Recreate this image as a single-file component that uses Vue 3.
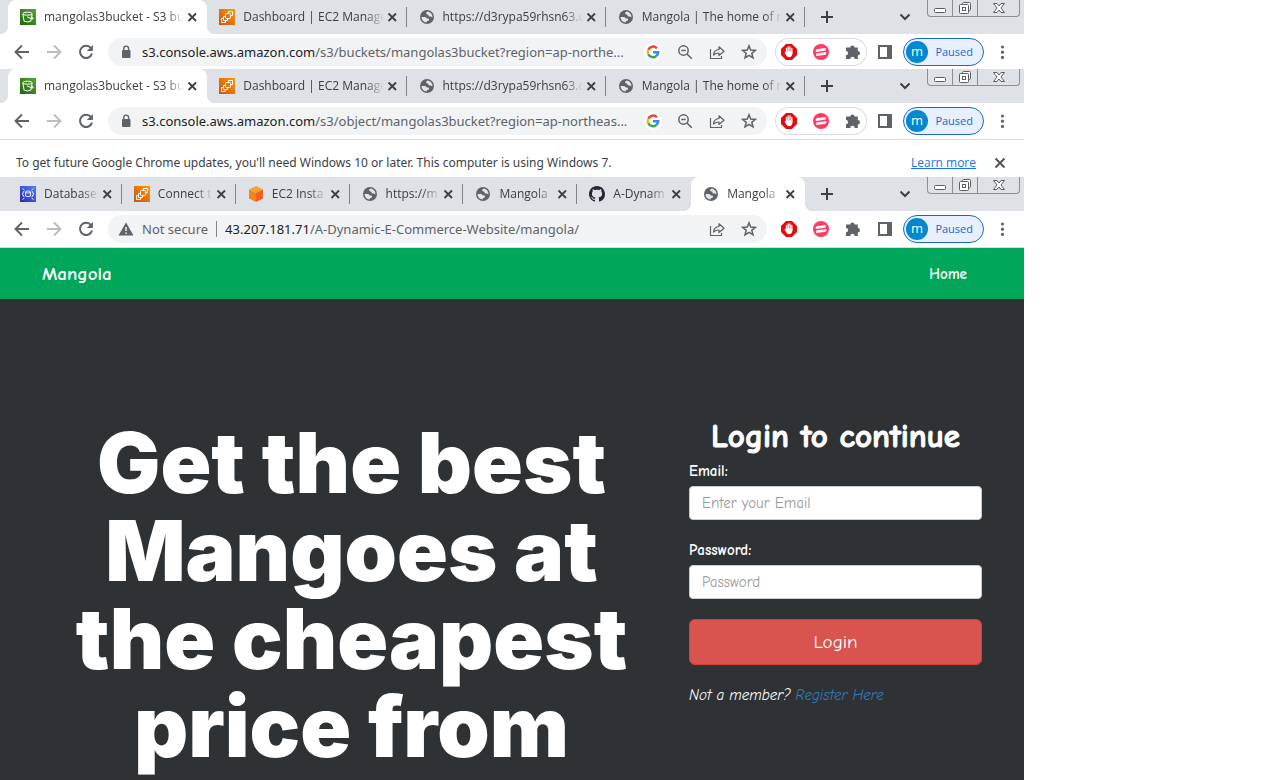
<script setup>
const wideTabs = [
  { icon: 's3', title: 'mangolas3bucket - S3 bu', active: true },
  { icon: 'ec2', title: 'Dashboard | EC2 Manage' },
  { icon: 'globe', title: 'https://d3rypa59rhsn63.c' },
  { icon: 'globe', title: 'Mangola | The home of m' },
]
const windows = [
  {
    tabs: wideTabs, host: 's3.console.aws.amazon.com', path: '/s3/buckets/mangolas3bucket?region=ap-northe...',
    secure: true, notice: false,
  },
  {
    tabs: wideTabs, host: 's3.console.aws.amazon.com', path: '/s3/object/mangolas3bucket?region=ap-northeas...',
    secure: true, notice: true,
  },
  {
    tabs: [
      { icon: 'rds', title: 'Databases' },
      { icon: 'ec2', title: 'Connect t' },
      { icon: 'cube', title: 'EC2 Insta' },
      { icon: 'globe', title: 'https://m' },
      { icon: 'globe', title: 'Mangola' },
      { icon: 'github', title: 'A-Dynam' },
      { icon: 'globe', title: 'Mangola', active: true },
    ],
    host: '43.207.181.71', path: '/A-Dynamic-E-Commerce-Website/mangola/',
    secure: false, notice: false,
  },
]
</script>

<template>
  <div class="desk">
    <svg class="sprite" aria-hidden="true">
      <defs>
        <linearGradient id="gGreen" x1="0" y1="1" x2="1" y2="0"><stop offset="0" stop-color="#1b660f" /><stop offset="1" stop-color="#5fa237" /></linearGradient>
        <linearGradient id="gOrange" x1="0" y1="1" x2="1" y2="0"><stop offset="0" stop-color="#c8511b" /><stop offset="1" stop-color="#f90" /></linearGradient>
        <linearGradient id="gBlue" x1="0" y1="1" x2="1" y2="0"><stop offset="0" stop-color="#2e27ad" /><stop offset="1" stop-color="#527fff" /></linearGradient>
      </defs>
      <symbol id="s3" viewBox="0 0 16 16">
        <rect width="16" height="16" fill="url(#gGreen)" />
        <g fill="none" stroke="#fff" stroke-width="1"><ellipse cx="7.5" cy="4.7" rx="4.7" ry="1.5" /><path d="M2.800 5l1.300 7.200q3.300 1.500 6.700 0L12.200 5M7 7.800l5 2.200q1.800.3 1-1l-1-1" /></g>
      </symbol>
      <symbol id="ec2" viewBox="0 0 16 16">
        <rect width="16" height="16" fill="url(#gOrange)" />
        <g fill="none" stroke="#fff" stroke-width="1"><rect x="6.500" y="4.500" width="5" height="5" rx="1" /><path d="M6.500 7.500h-2v4h4v-2M4.500 9.500h-2v4h4v-2M9.500 4.500v-2h4v4h-2" /></g>
      </symbol>
      <symbol id="rds" viewBox="0 0 16 16">
        <rect width="16" height="16" fill="url(#gBlue)" />
        <g fill="none" stroke="#fff" stroke-width="0.900"><path d="M5.500 6v4q2.500 1.300 5 0V6M4 5L2.500 8 4 11M12 5l1.500 3-1.500 3M2.500 2.500l2 1.500M13.500 2.500l-2 1.500M2.500 13.500l2-1.500M13.500 13.500l-2-1.500" /><ellipse cx="8" cy="6" rx="2.500" ry="1" /></g>
      </symbol>
      <symbol id="cube" viewBox="0 0 16 16">
        <path d="M8 0l7 3.500L8 7 1 3.500z" fill="#fba22d" /><path d="M1 3.500L8 7v9l-7-3.500z" fill="#f58220" /><path d="M15 3.500L8 7v9l7-3.500z" fill="#f06022" />
      </symbol>
      <symbol id="globe" viewBox="0 0 16 16">
        <circle cx="8" cy="8" r="7" fill="#5f6368" />
        <path d="M2.500 8h3.200q1.900 0 2.100 1.600h1.500q.9.200.8 1.200-.1 1-1.200 1.100H7.800v1.600Q2.900 13.300 2.500 8zM8.800 2.600q-1.700.6-1.700 1.700 0 1.100 1.200 1.200h.5q.7.100.7.900 0 1 1 1h1.400q.8.100.8.800h.8Q13.300 3.600 8.800 2.600z" fill="#e4e6ea" />
      </symbol>
      <symbol id="github" viewBox="0 0 16 16">
        <path fill="#24292f" d="M8 0C3.580 0 0 3.580 0 8c0 3.540 2.290 6.530 5.470 7.590.4.070.55-.17.550-.38 0-.19-.01-.82-.01-1.490-2.010.37-2.530-.49-2.690-.94-.09-.23-.48-.94-.82-1.130-.28-.15-.68-.52-.01-.53.63-.01 1.080.58 1.230.82.720 1.210 1.870.87 2.330.66.070-.52.280-.87.510-1.070-1.780-.2-3.640-.89-3.640-3.950 0-.87.310-1.590.82-2.150-.08-.2-.36-1.020.08-2.120 0 0 .67-.21 2.200.82.640-.18 1.320-.27 2-.27s1.360.09 2 .27c1.530-1.040 2.200-.82 2.200-.82.440 1.100.16 1.920.08 2.120.51.560.82 1.270.82 2.150 0 3.070-1.870 3.750-3.650 3.950.29.250.54.730.54 1.480 0 1.070-.01 1.930-.01 2.200 0 .21.150.46.550.38A8.010 8.010 0 0016 8c0-4.420-3.580-8-8-8z" />
      </symbol>
      <symbol id="x" viewBox="0 0 16 16"><path d="M4.500 4.500l7.500 7.500M12 4.500L4.500 12" stroke="#3c4043" stroke-width="1.800" /></symbol>
      <symbol id="xlarge" viewBox="0 0 16 16"><path d="M3.500 3.500l9 9M12.500 3.500l-9 9" stroke="#4d5156" stroke-width="1.900" /></symbol>
      <symbol id="plus" viewBox="0 0 16 16"><path d="M8 2v12M2 8h12" stroke="#3c4043" stroke-width="2" /></symbol>
      <symbol id="chev" viewBox="0 0 16 16"><path d="M3.500 5.500L8 10l4.500-4.500" fill="none" stroke="#3c4043" stroke-width="2" /></symbol>
      <symbol id="back" viewBox="0 0 16 16"><path d="M15 8H2M8 1.500L1.500 8 8 14.500" fill="none" stroke="currentColor" stroke-width="1.900" /></symbol>
      <symbol id="fwd" viewBox="0 0 16 16"><path d="M1 8h13M8 1.500L14.500 8 8 14.500" fill="none" stroke="currentColor" stroke-width="1.900" /></symbol>
      <symbol id="reload" viewBox="0 0 16 16"><path d="M13 4.200A6.100 6.100 0 1 0 14 9.500" fill="none" stroke="currentColor" stroke-width="2" /><path d="M14.900 1v6H8.800z" fill="currentColor" /></symbol>
      <symbol id="lock" viewBox="0 0 16 16"><rect x="4" y="6" width="8.500" height="8" rx="1" fill="#5f6368" /><path d="M5.800 7V4.500a2.400 2.400 0 0 1 4.800 0V7" fill="none" stroke="#5f6368" stroke-width="1.400" /></symbol>
      <symbol id="warn" viewBox="0 0 16 16"><path d="M8 1.500L15.500 14.500H.5z" fill="#5f6368" /><path d="M8 6v4M8 11.500v1.500" stroke="#f1f3f4" stroke-width="1.500" /></symbol>
      <symbol id="google" viewBox="0 0 20 20">
        <circle cx="10" cy="10" r="9" fill="#fff" />
        <g fill="none" stroke-width="2.500"><path d="M13.900 6.300A5.200 5.200 0 0 0 5.300 7.800" stroke="#ea4335" /><path d="M5.300 7.700a5.200 5.200 0 0 0 0 4.700" stroke="#fbbc05" /><path d="M5.300 12.300a5.200 5.200 0 0 0 8 1.700" stroke="#34a853" /><path d="M13.300 14A5.200 5.200 0 0 0 15.200 10.200H10" stroke="#4285f4" /></g>
      </symbol>
      <symbol id="mag" viewBox="0 0 16 16"><g fill="none" stroke="#5f6368" stroke-width="1.500"><circle cx="6.500" cy="6.500" r="4.700" /><path d="M10 10l4.800 4.800M4.300 6.500h4.400" /></g></symbol>
      <symbol id="share" viewBox="0 0 16 16"><path d="M1.500 5v9.500h11V12M4.500 11q.4-5 5.500-5.500V2.800L15 7.200 10 11.500V9q-3.500 0-5.500 2z" fill="none" stroke="#5f6368" stroke-width="1.200" stroke-linejoin="round" /></symbol>
      <symbol id="star" viewBox="0 0 16 16"><path d="M8 1.800l1.700 4.300 4.700.3-3.600 2.900 1.200 4.500L8 11.300l-4 2.500 1.200-4.500L1.600 6.400l4.700-.3z" fill="none" stroke="#5f6368" stroke-width="1.500" /></symbol>
      <symbol id="block" viewBox="0 0 16 16"><path d="M5 0h6l5 5v6l-5 5H5l-5-5V5z" fill="#e40d0d" /><path d="M5.500 9V4.500M7.200 8V3M9 8V3M10.800 9V4.500" stroke="#fff" stroke-width="1.300" stroke-linecap="round" /><path d="M4.900 7.500h6.500V10q-.5 3-3 3.200Q6 13.200 5 11L3.500 8.800z" fill="#fff" /></symbol>
      <symbol id="pink" viewBox="0 0 16 16"><circle cx="8" cy="8" r="8" fill="#ff3b62" /><path d="M12.800 4.600L5 5.600Q3 6 3.300 7.400M3 7.300L12.800 5.900M3.200 11.400L11 10.400Q13 10 12.700 8.600M13 8.700L3.200 10.100" fill="none" stroke="#fff" stroke-width="1.300" /></symbol>
      <symbol id="puzzle" viewBox="0 0 16 16"><path d="M1 3.500h4.300a2.100 2.100 0 0 1 4.200 0h3.300v3.500a2.200 2.200 0 0 1 0 4.400V15H9.700a2.200 2.200 0 0 0-4.400 0H1v-3.700a2.100 2.100 0 0 0 0-4.200z" fill="#5f6368" /></symbol>
      <symbol id="panel" viewBox="0 0 16 16"><path d="M2 2h12v12H2z" fill="none" stroke="#5f6368" stroke-width="2" /><path d="M10 2h4v12H10z" fill="#5f6368" /></symbol>
      <symbol id="dots" viewBox="0 0 16 16"><g fill="#5f6368"><circle cx="8.500" cy="3" r="1.600" /><circle cx="8.500" cy="8.200" r="1.600" /><circle cx="8.500" cy="13.400" r="1.600" /></g></symbol>
      <symbol id="wmin" viewBox="0 0 16 16"><rect x="2.500" y="8.500" width="11" height="4" rx="1" fill="#fff" stroke="#5a5d61" /></symbol>
      <symbol id="wmax" viewBox="0 0 16 16"><g fill="#fff" stroke="#5a5d61"><rect x="5.500" y="2.500" width="8" height="8" rx="1" /><rect x="2.500" y="4.500" width="9" height="9" rx="1" /><rect x="5.500" y="7.500" width="3" height="3" /></g></symbol>
      <symbol id="wclose" viewBox="0 0 16 16"><path d="M2.500 3.500h3.500l2 2.500 2-2.500h3.500L10 8l3.500 4.500H10L8 10l-2 2.500H2.500L6 8z" fill="#fff" stroke="#5a5d61" /></symbol>
    </svg>

    <section v-for="(w, i) in windows" :key="i" class="window">
      <div class="strip">
        <div class="tabs">
          <div v-for="(t, k) in w.tabs" :key="k" class="tab" :class="{ active: t.active, beforeActive: w.tabs[k + 1]?.active }">
            <svg class="i16"><use :href="'#' + t.icon" /></svg>
            <span class="title">{{ t.title }}</span>
            <button class="bare" aria-label="Close tab"><svg class="i16"><use href="#x" /></svg></button>
          </div>
        </div>
        <button class="bare newtab" aria-label="New tab"><svg class="i16"><use href="#plus" /></svg></button>
        <button class="bare search" aria-label="Search tabs"><svg class="i16"><use href="#chev" /></svg></button>
        <div class="controls">
          <button class="bare" aria-label="Minimize"><svg class="i16"><use href="#wmin" /></svg></button>
          <button class="bare" aria-label="Restore"><svg class="i16"><use href="#wmax" /></svg></button>
          <button class="bare wide" aria-label="Close"><svg class="i16"><use href="#wclose" /></svg></button>
        </div>
      </div>
      <div class="toolbar" :class="{ lined: i > 0 }">
        <button class="bare slot" aria-label="Back"><svg class="i16"><use href="#back" /></svg></button>
        <button class="bare slot dim" aria-label="Forward"><svg class="i16"><use href="#fwd" /></svg></button>
        <button class="bare slot" aria-label="Reload"><svg class="i16"><use href="#reload" /></svg></button>
        <div class="omnibox">
          <svg class="i16"><use :href="w.secure ? '#lock' : '#warn'" /></svg>
          <span v-if="!w.secure" class="insecure">Not secure</span>
          <span class="url"><span class="host">{{ w.host }}</span>{{ w.path }}</span>
          <button v-if="w.secure" class="bare slot" aria-label="Google"><svg class="i20"><use href="#google" /></svg></button>
          <button v-if="w.secure" class="bare slot" aria-label="Zoom"><svg class="i16"><use href="#mag" /></svg></button>
          <button class="bare slot" aria-label="Share"><svg class="i16"><use href="#share" /></svg></button>
          <button class="bare slot" aria-label="Bookmark"><svg class="i16"><use href="#star" /></svg></button>
        </div>
        <div class="extensions" :class="{ ringed: w.secure }">
          <button class="bare slot" aria-label="Ad blocker"><svg class="i16"><use href="#block" /></svg></button>
          <button class="bare slot" aria-label="Extension"><svg class="i16"><use href="#pink" /></svg></button>
          <button class="bare slot" aria-label="Extensions"><svg class="i16"><use href="#puzzle" /></svg></button>
        </div>
        <button class="bare slot" aria-label="Side panel"><svg class="i16"><use href="#panel" /></svg></button>
        <button class="profile"><span class="avatar">m</span><span>Paused</span></button>
        <button class="bare slot" aria-label="Menu"><svg class="i16"><use href="#dots" /></svg></button>
      </div>
      <div v-if="w.notice" class="notice">
        <span class="message">To get future Google Chrome updates, you'll need Windows 10 or later. This computer is using Windows 7.</span>
        <a href="#learn">Learn more</a>
        <button class="bare slot" aria-label="Dismiss"><svg class="i16"><use href="#xlarge" /></svg></button>
      </div>
    </section>

    <nav class="nav">
      <a class="brand" href="#top">Mangola</a>
      <a href="#home">Home</a>
    </nav>
    <main class="hero">
      <h1>Get the best<br>Mangoes at<br>the cheapest<br>price from</h1>
      <form class="login" @submit.prevent>
        <h2>Login to continue</h2>
        <label for="email">Email:</label>
        <input id="email" type="email" placeholder="Enter your Email">
        <label for="password">Password:</label>
        <input id="password" type="password" placeholder="Password">
        <button class="submit" type="submit">Login</button>
        <p><i>Not a member? <a href="#register">Register Here</a></i></p>
      </form>
    </main>
  </div>
</template>

<style>
body {
  background: #fff;
}
</style>

<style scoped>
* {
  box-sizing: border-box;
}
.desk {
  max-width: 1024px;
  height: 100vh;
  overflow: hidden;
  display: flex;
  flex-direction: column;
  font: 12px/16px "Segoe UI", "Open Sans", sans-serif;
  color: #3c4043;
}
.sprite {
  position: absolute;
  width: 0;
  height: 0;
}
.i16 {
  width: 16px;
  height: 16px;
  flex: none;
  display: block;
}
.i20 {
  width: 20px;
  height: 20px;
  display: block;
}
.bare {
  border: 0;
  padding: 0;
  background: none;
  color: #5f6368;
  flex: none;
}
.slot {
  width: 32px;
  display: flex;
  justify-content: center;
}
.dim {
  color: #babcbe;
}
.window {
  flex: none;
}
.strip {
  height: 34px;
  background: #dee1e6;
  display: flex;
  align-items: center;
  padding: 0 4px 0 8px;
}
.tabs {
  flex: 0 1 797px;
  min-width: 0;
  height: 34px;
  display: flex;
}
.tab {
  flex: 1 1 0;
  min-width: 0;
  display: flex;
  align-items: center;
  padding: 0 7px 0 12px;
  position: relative;
}
.tab:not(.active):not(.beforeActive)::after {
  content: "";
  position: absolute;
  right: 0;
  top: 7px;
  width: 1px;
  height: 20px;
  background: #808388;
}
.active {
  background: #fff;
  border-radius: 8px 8px 0 0;
}
.active::before,
.active::after {
  content: "";
  position: absolute;
  bottom: 0;
  width: 8px;
  height: 8px;
}
.active::before {
  left: -8px;
  background: radial-gradient(circle at 0 0, #dee1e6 8px, #fff 8px);
}
.active::after {
  right: -8px;
  background: radial-gradient(circle at 100% 0, #dee1e6 8px, #fff 8px);
}
.title {
  flex: 1;
  min-width: 0;
  margin: 0 0 0 8px;
  white-space: nowrap;
  overflow: hidden;
  mask-image: linear-gradient(to left, transparent, #000 18px);
}
.newtab {
  margin-left: 14px;
}
.search {
  margin-left: auto;
  margin-right: 14px;
}
.controls {
  align-self: flex-start;
  display: flex;
  height: 17px;
  border: 1px solid #8b8e93;
  border-top: 0;
  border-radius: 0 0 4px 4px;
}
.controls .bare {
  width: 25px;
  display: flex;
  justify-content: center;
  border-right: 1px solid #8b8e93;
}
.controls .wide {
  width: 41px;
  border-right: 0;
}
.toolbar {
  height: 35px;
  padding: 0 6px;
  display: flex;
  align-items: center;
  background: #fff;
}
.lined {
  height: 37px;
  border-bottom: 1px solid #dadce0;
}
.omnibox {
  flex: 1;
  min-width: 0;
  height: 28px;
  margin: 0 8px 0 6px;
  padding: 0 2px 0 10px;
  display: flex;
  align-items: center;
  border-radius: 14px;
  background: #f1f3f4;
  font: 13px/20px "Segoe UI", "Noto Sans", sans-serif;
  color: #5f6368;
}
.url {
  flex: 1;
  min-width: 0;
  margin-left: 8px;
  white-space: nowrap;
  overflow: hidden;
}
.host {
  color: #202124;
}
.insecure {
  margin-left: 8px;
  padding-right: 8px;
  border-right: 1px solid #80868b;
  line-height: 16px;
  white-space: nowrap;
}
.extensions {
  display: flex;
  align-items: center;
  width: 92px;
  height: 28px;
  margin-right: 2px;
  border-radius: 14px;
  justify-content: center;
}
.ringed {
  box-shadow: inset 0 0 0 1px #dadce0;
}
.profile {
  flex: none;
  width: 81px;
  height: 28px;
  margin: 0 2px;
  padding: 0 10px 0 2px;
  display: flex;
  align-items: center;
  justify-content: space-between;
  border: 1px solid #1967d2;
  border-radius: 14px;
  background: #e8f0fe;
  color: #1967d2;
  font: 11px/16px "Segoe UI", "Open Sans", sans-serif;
}
.avatar {
  width: 22px;
  height: 22px;
  border-radius: 50%;
  background: #0288d1;
  color: #fff;
  font-size: 13px;
  line-height: 20px;
  text-align: center;
}
.notice {
  height: 37px;
  padding: 8px 8px 0 16px;
  display: flex;
  align-items: center;
}
.message {
  flex: 1;
  font-family: "Segoe UI", "Noto Sans", sans-serif;
}
.notice a {
  margin-right: 8px;
  color: #1a73e8;
}
.nav {
  flex: none;
  height: 51px;
  padding: 0 57px 0 42px;
  display: flex;
  align-items: center;
  justify-content: space-between;
  background: #00a65a;
  font-family: "Comic Sans MS", "Comic Neue", "Open Sans", sans-serif;
  font-size: 15px;
  font-weight: 600;
}
.nav a {
  color: #fff;
  text-decoration: none;
}
.nav .brand {
  font-size: 19px;
}
.hero {
  flex: 1;
  padding: 120px 42px 0;
  display: flex;
  gap: 28px;
  background: #2e3235;
  color: #fff;
}
h1 {
  flex: 1;
  min-width: 0;
  margin: 0;
  text-align: center;
  font: 900 84px/88px "Arial Black", Inter, sans-serif;
}
.login {
  flex: 0 0 293px;
  font: 15px/20px "Comic Sans MS", "Comic Neue", "Open Sans", sans-serif;
}
h2 {
  margin: 0 0 8px;
  text-align: center;
  font-size: 33px;
  line-height: 34px;
  font-weight: 700;
  -webkit-text-stroke: 1px currentColor;
  white-space: nowrap;
}
label {
  display: block;
  margin-bottom: 5px;
  font-weight: 700;
}
input {
  display: block;
  width: 100%;
  height: 34px;
  margin-bottom: 20px;
  padding: 0 12px;
  border: 1px solid #ccc;
  border-radius: 4px;
  background: #fff;
  font: inherit;
}
input::placeholder {
  color: #999;
}
.submit {
  width: 100%;
  height: 46px;
  border: 1px solid #d43f3a;
  border-radius: 6px;
  background: #d9534f;
  color: #fff;
  font: inherit;
  font-size: 19px;
}
p {
  margin: 20px 0 0;
}
p a {
  color: #337ab7;
  text-decoration: none;
}
</style>
